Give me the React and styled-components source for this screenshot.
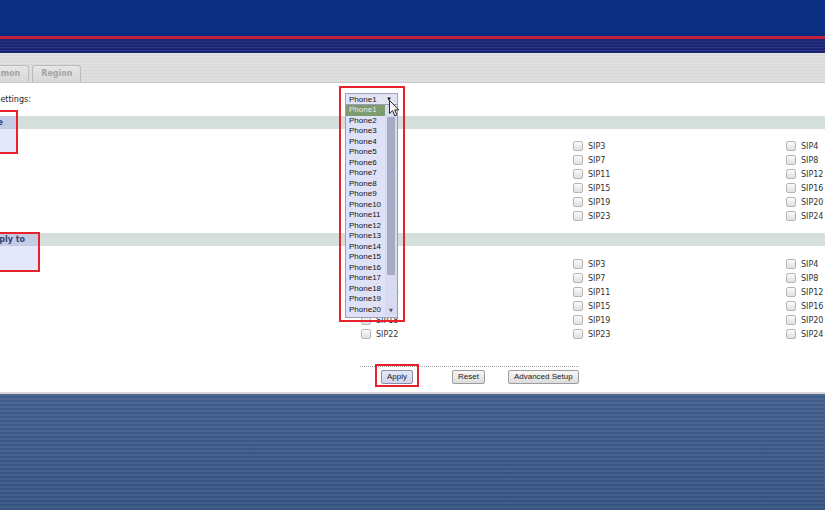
import React from 'react';
import styled, { createGlobalStyle } from 'styled-components';

const GlobalStyle = createGlobalStyle`
  html, body {
    margin: 0;
    padding: 0;
    overflow: hidden;
    background: #fff;
  }
  body {
    font-family: 'DejaVu Sans', Verdana, sans-serif;
  }
`;

const phones = Array.from({ length: 20 }, (_, i) => `Phone${i + 1}`);
const sipRows = Array.from({ length: 6 }, (_, r) => [4 * r + 2, 4 * r + 3, 4 * r + 4]);

const App = () => {
	return (
		<>
			<GlobalStyle />
			<Viewport>
				<Page>
					<TopBand />
					<RedLine />
					<StripeBand />
					<TabBand>
						<Tab>Common</Tab>
						<Tab>Region</Tab>
					</TabBand>

					<Content>
						<SettingsRow>
							<SettingsLabel>Phone Settings:</SettingsLabel>
							<SelectWrap>
								<SelectBox>
									<span>Phone1</span>
									<SelectArrow>▼</SelectArrow>
								</SelectBox>
								<DropList>
									<Options>
										{phones.map((p, i) => (
											<Option key={p} $selected={i === 0}>
												{p}
											</Option>
										))}
									</Options>
									<ScrollTrack>
										<Thumb />
										<ScrollArrow>▼</ScrollArrow>
									</ScrollTrack>
								</DropList>
								<Cursor>
									<svg width="11" height="17" viewBox="0 0 11 17">
										<path
											d="M0.5 0.5 L0.5 13.5 L3.6 10.6 L5.8 15.8 L7.9 14.9 L5.7 9.9 L9.8 9.9 Z"
											fill="#f4f4f4"
											stroke="#2a2a2a"
											strokeWidth="1"
											strokeLinejoin="round"
										/>
									</svg>
								</Cursor>
								<Highlight $top={-7} $left={-6} $width={66} $height={236} />
							</SelectWrap>
						</SettingsRow>

						<Section $mt={11}>
							<HeadBar>
								<LabelHead $w={96}>Phone</LabelHead>
							</HeadBar>
							<Body>
								<LabelBody $w={96} $h={23} />
								<CheckGrid $mt={10}>
									{sipRows.flat().map(n => (
										<CheckItem key={n}>
											<Box type="checkbox" />
											<span>SIP{n}</span>
										</CheckItem>
									))}
								</CheckGrid>
							</Body>
							<Highlight $top={-6} $left={0} $width={98} $height={44} />
						</Section>

						<Section $mt={10}>
							<HeadBar>
								<LabelHead $w={118}>Apply to</LabelHead>
							</HeadBar>
							<Body>
								<LabelBody $w={118} $h={24} />
								<CheckGrid $mt={11}>
									{sipRows.flat().map(n => (
										<CheckItem key={n}>
											<Box type="checkbox" />
											<span>SIP{n}</span>
										</CheckItem>
									))}
								</CheckGrid>
							</Body>
							<Highlight $top={-1} $left={0} $width={120} $height={40} />
						</Section>

						<ButtonBar>
							<Button $ml={21} $hot>
								Apply
								<Highlight $top={-7} $left={-7} $width={44} $height={23} />
							</Button>
							<Button $ml={39}>Reset</Button>
							<Button $ml={23}>Advanced Setup</Button>
						</ButtonBar>
					</Content>

					<Footer />
				</Page>
			</Viewport>
		</>
	);
};

export default App;

const Viewport = styled.div`
	width: 825px;
	height: 510px;
	overflow: hidden;
`;

const Page = styled.div`
	margin-left: -80px;
	width: 905px;
`;

const TopBand = styled.div`
	height: 36px;
	background: #0b2e81;
`;

const RedLine = styled.div`
	height: 3px;
	background: #c41f3b;
`;

const StripeBand = styled.div`
	height: 14px;
	background: repeating-linear-gradient(
		to bottom,
		#1b2570 0,
		#1b2570 2px,
		#28368a 2px,
		#28368a 3px
	);
`;

const TabBand = styled.div`
	height: 29px;
	display: flex;
	align-items: flex-end;
	gap: 3px;
	padding-left: 52px;
	border-bottom: 1px solid #c6c6c6;
	background: repeating-linear-gradient(
		to bottom,
		#dfdfdf 0,
		#dfdfdf 2px,
		#d9d9d9 2px,
		#d9d9d9 3px
	);
`;

const Tab = styled.div`
	box-sizing: border-box;
	height: 17px;
	padding: 0 8px;
	border: 1px solid #bcbcbc;
	border-bottom: none;
	border-radius: 3px 3px 0 0;
	background: linear-gradient(#e6e6e6, #d7d7d7);
	font-size: 8px;
	font-weight: bold;
	line-height: 16px;
	color: #a4a4a4;
`;

const Content = styled.div`
	background: #fff;
	padding: 10px 0 8px;
`;

const SettingsRow = styled.div`
	display: grid;
	grid-template-columns: 425px auto;
	align-items: center;
	height: 12px;
	font-size: 8px;
	color: #222;
`;

const SettingsLabel = styled.div`
	padding-left: 48px;
	white-space: nowrap;
`;

const SelectWrap = styled.div`
	position: relative;
	width: 53px;
	height: 12px;
	z-index: 5;
`;

const SelectBox = styled.div`
	box-sizing: border-box;
	width: 53px;
	height: 12px;
	border: 1px solid #9ea2ba;
	background: #e2e4f5;
	display: flex;
	align-items: center;
	justify-content: space-between;
	padding: 0 5px 0 3px;
	font-family: 'Liberation Sans', Arial, sans-serif;
	font-size: 8px;
	color: #111;
`;

const SelectArrow = styled.span`
	font-size: 6px;
	color: #111;
`;

const DropList = styled.div`
	position: absolute;
	top: 11px;
	left: 0;
	width: 53px;
	box-sizing: border-box;
	border: 1px solid #9a9eb6;
	background: #dfe2f7;
	display: flex;
	padding-bottom: 2px;
`;

const Options = styled.div`
	flex: 1;
`;

const Option = styled.div`
	height: 10.5px;
	line-height: 10.5px;
	padding-left: 3px;
	font-family: 'Liberation Sans', Arial, sans-serif;
	font-size: 8px;
	color: ${p => (p.$selected ? '#e2e8f6' : '#111')};
	background: ${p => (p.$selected ? '#7f9b70' : 'transparent')};
`;

const ScrollTrack = styled.div`
	width: 12px;
	box-sizing: border-box;
	padding: 0 2px;
	background: #d7daf0;
	display: flex;
	flex-direction: column;
`;

const Thumb = styled.div`
	margin-top: 12px;
	height: 158px;
	background: #a6aac3;
	border-radius: 1px;
`;

const ScrollArrow = styled.div`
	margin-top: auto;
	font-size: 5px;
	text-align: center;
	color: #555;
	padding-bottom: 2px;
`;

const Cursor = styled.div`
	position: absolute;
	left: 44px;
	top: 7px;
	width: 11px;
	height: 17px;
	z-index: 7;
	svg {
		display: block;
	}
`;

const Highlight = styled.div`
	position: absolute;
	top: ${p => p.$top}px;
	left: ${p => p.$left}px;
	width: ${p => p.$width}px;
	height: ${p => p.$height}px;
	box-sizing: border-box;
	border: 2px solid #e8222b;
	pointer-events: none;
	z-index: 6;
`;

const Section = styled.div`
	position: relative;
	margin-top: ${p => p.$mt}px;
`;

const HeadBar = styled.div`
	height: 13px;
	background: #d5dfdb;
	display: flex;
`;

const LabelHead = styled.div`
	box-sizing: border-box;
	width: ${p => p.$w}px;
	background: #c3cbe5;
	padding-right: 13px;
	text-align: right;
	font-size: 8px;
	font-weight: bold;
	line-height: 13px;
	color: #354377;
	white-space: nowrap;
`;

const Body = styled.div`
	display: grid;
	grid-template-columns: 441px 212px 213px 212px;
	align-items: start;
`;

const LabelBody = styled.div`
	width: ${p => p.$w}px;
	height: ${p => p.$h}px;
	background: #e5e7fa;
`;

const CheckGrid = styled.div`
	grid-column: 2 / span 3;
	display: grid;
	grid-template-columns: 212px 213px 212px;
	grid-auto-rows: 14px;
	margin-top: ${p => p.$mt}px;
`;

const CheckItem = styled.label`
	display: flex;
	align-items: center;
	gap: 5px;
	font-size: 8px;
	color: #333;
`;

const Box = styled.input`
	appearance: none;
	width: 10px;
	height: 10px;
	margin: 0;
	box-sizing: border-box;
	border: 1px solid #b6b6b6;
	border-radius: 2px;
	background: linear-gradient(#fbfbfb, #e0e0e0);
`;

const ButtonBar = styled.div`
	margin: 25px 0 0 440px;
	width: 219px;
	border-top: 1px dotted #a8a8a8;
	padding-top: 3px;
	display: flex;
`;

const Button = styled.button`
	position: relative;
	box-sizing: border-box;
	height: 14px;
	margin: 0 0 0 ${p => p.$ml}px;
	padding: 0 5px;
	border: 1px solid ${p => (p.$hot ? '#8a8ea8' : '#9c9c9c')};
	border-radius: 2px;
	background: ${p => (p.$hot ? 'linear-gradient(#e6e8f8, #d2d5ee)' : 'linear-gradient(#f8f8f8, #dcdcdc)')};
	font-family: 'Liberation Sans', Arial, sans-serif;
	font-size: 8px;
	color: #222;
	line-height: 12px;
	white-space: nowrap;
`;

const Footer = styled.div`
	height: 130px;
	border-top: 2px solid #d8d6d6;
	background: repeating-linear-gradient(
			to bottom,
			rgba(255, 255, 255, 0.07) 0,
			rgba(255, 255, 255, 0.07) 2px,
			transparent 2px,
			transparent 4px
		),
		linear-gradient(#405c8b, #34507f);
`;
